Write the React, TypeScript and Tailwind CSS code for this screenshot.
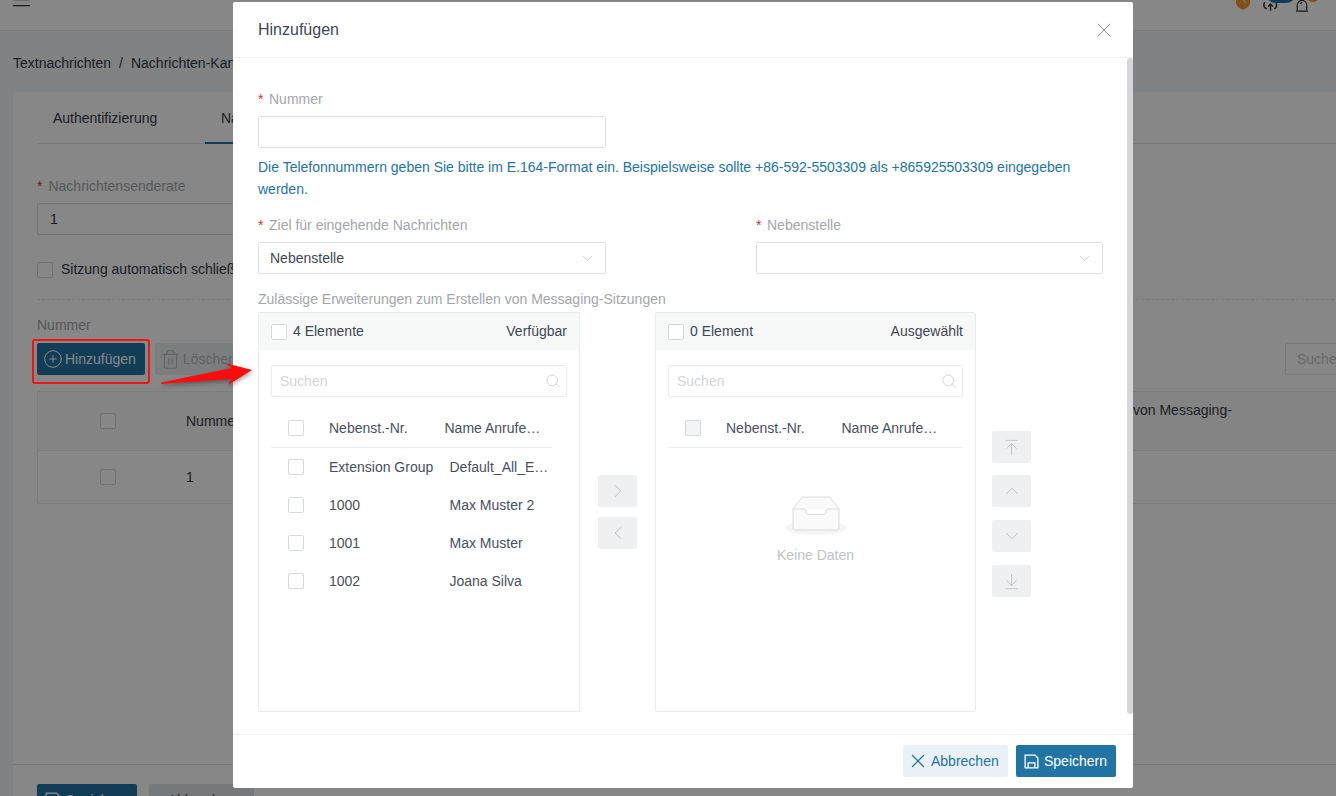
import React from "react";
import { CirclePlus, Trash2, X, Search, ChevronRight, ChevronLeft, ChevronUp, ChevronDown, ArrowUpToLine, ArrowDownToLine, TextAlignJustify } from "lucide-react";

function Box({ disabled = false, dark = false }: { disabled?: boolean; dark?: boolean }) {
  return <span className={`block w-4 h-4 shrink-0 rounded-[2px] border ${dark ? "border-[#d4d9dd]" : "border-[#dfe2e5]"} ${disabled ? "bg-[#f3f4f6]" : "bg-white"}`} />;
}

function Req({ children }: { children: React.ReactNode }) {
  return (
    <div className="h-[22px] leading-[22px] text-[14px] text-[#a3a6ab] flex">
      <span className="text-[#c23a2b] mr-[5px] w-[6px]">*</span>
      {children}
    </div>
  );
}

function SaveIcon({ className }: { className?: string }) {
  return (
    <svg viewBox="0 0 16 16" className={className} fill="none" stroke="currentColor" strokeWidth="1.4">
      <path d="M1.2 1.2h10.6l3 3v10.600H1.2z" />
      <path d="M4.400 14.800V9.400h7.200v5.400" />
    </svg>
  );
}

function Square({ children, className = "" }: { children: React.ReactNode; className?: string }) {
  return <div className={`w-[39px] h-8 rounded-[2px] bg-[#eff0f2] text-[#b9bcc0] flex items-center justify-center ${className}`}>{children}</div>;
}

function SearchBox() {
  return (
    <div className="h-8 border border-[#e9ebee] rounded-[2px] flex items-center justify-between pl-2 pr-[5px] text-[14px] text-[#d3d5d9]">
      <span>Suchen</span>
      <Search size={16} strokeWidth={1.1} className="text-[#c4c6ca]" />
    </div>
  );
}

function TransferHead({ left, right }: { left: string; right: string }) {
  return (
    <div className="h-[37px] bg-[#f7f9f9] flex items-center justify-between pl-3 pr-3 text-[14px] text-[#3f4754]">
      <div className="flex items-center gap-[6px]">
        <Box dark />
        <span>{left}</span>
      </div>
      <span>{right}</span>
    </div>
  );
}

function TableHead({ disabled = false, w }: { disabled?: boolean; w: string }) {
  return (
    <div className={`h-[51px] border-b border-[#ebedf0] flex items-center text-[14px] text-[#49505c] pt-[12px] ${w}`}>
      <span className="ml-[17px] mr-[25px]"><Box disabled={disabled} dark /></span>
      <span className="w-[115.5px]">Nebenst.-Nr.</span>
      <span>Name Anrufe…</span>
    </div>
  );
}

const rows = [
  ["Extension Group", "Default_All_E…"],
  ["1000", "Max Muster 2"],
  ["1001", "Max Muster"],
  ["1002", "Joana Silva"],
];

export default function App() {
  return (
    <div className="relative w-[1336px] h-[796px] overflow-hidden bg-[#f1f5f9] text-[14px] text-[#333a46] font-['Liberation_Sans',Arial,sans-serif]">
      {/* page behind the dialog */}
      <div className="h-[31px] bg-white border-b border-[#e6e8ea] overflow-hidden flex items-end justify-between pl-[14px] pb-[18px]">
        <TextAlignJustify size={21} strokeWidth={1.5} className="text-[#333] mb-[2px] -ml-[3px]" />
        <div className="flex items-end mr-[27px]">
          <svg viewBox="0 0 14 20" className="w-[14px] h-5 text-[#f09a2c] mb-[2px]">
            <path d="M7 0l7 3v9c0 4-3 6-7 8-4-2-7-4-7-8V3z" fill="currentColor" />
            <path d="M5 7l5 6" stroke="#fff" strokeWidth="1.500" opacity=".5" />
          </svg>
          <div className="relative ml-[12px]">
            <span className="absolute -top-[14px] left-[5px] w-7 h-[17px] rounded-full bg-[#2274a5]" />
            <svg viewBox="0 0 18 12" className="block w-[17px] h-3 text-[#333]" fill="none" stroke="currentColor" strokeWidth="1.6">
              <path d="M3 2C1 5 2 8 5 9M15 3c1 3 0 5-2 6M9 11V4M6.500 6.500L9 4l2.500 2.500" />
            </svg>
          </div>
          <div className="relative ml-[16px]">
            <svg viewBox="0 0 16 14" className="block w-[14px] h-3 text-[#333]" fill="none" stroke="currentColor" strokeWidth="1.4">
              <path d="M2.500 12V6a5.500 5.500 0 0 1 11 0v6M1 13h14M6 4.500A3 3 0 0 1 8 3" />
            </svg>
            <span className="absolute -top-[10px] left-[12px] w-3 h-3 rounded-full bg-[#f09a2c]" />
          </div>
        </div>
      </div>

      <div className="ml-[13px] w-[1450px]">
        <div className="h-[61px] pt-[4px] flex items-center text-[#333a46]">
          <span>Textnachrichten</span>
          <span className="mx-[8px]">/</span>
          <span>Nachrichten-Kanäle</span>
        </div>
        <div className="bg-white h-[704px] px-6 flex flex-col">
          <div className="h-[52px] border-b border-[#e4e6e8] flex items-stretch">
            <div className="w-[168px] pl-4 pt-[16px] leading-5">Authentifizierung</div>
            <div className="w-[180px] pt-[16px] leading-5 pl-4 border-b-2 border-[#2274a5] h-[52px]">Nachrichten</div>
          </div>
          <div className="mt-[32px] h-5 leading-5 flex text-[#a3a6ab]">
            <span className="text-[#c23a2b] mr-[6px]">*</span>Nachrichtensenderate
          </div>
          <div className="mt-[7px] w-[400px] h-8 border border-[#d8dbde] rounded-[2px] flex items-center pl-3">1</div>
          <div className="mt-6 flex items-center gap-2">
            <Box dark />
            <span>Sitzung automatisch schließen</span>
          </div>
          <div className="mt-[19px] border-t border-dashed border-[#e4e6e8]" />
          <div className="mt-[15px] h-5 leading-5 text-[#a3a6ab]">Nummer</div>
          <div className="mt-2 flex items-center justify-between pr-[34px]">
            <div className="flex gap-[10px]">
              <div className="h-8 w-[108px] bg-[#2274a5] rounded-[2px] text-white flex items-center pl-[6px] gap-[2px]">
                <CirclePlus size={20} strokeWidth={1.2} />
                <span>Hinzufügen</span>
              </div>
              <div className="h-8 w-[110px] bg-[#e9eeee] rounded-[2px] text-[#b4b8bc] flex items-center pl-[5px] gap-[2px]">
                <Trash2 size={21} strokeWidth={1.2} />
                <span>Löschen</span>
              </div>
            </div>
            <div className="h-8 w-[120px] border border-[#e4e6e8] rounded-[2px] text-[#c4c6ca] flex items-center pl-[11px]">Suchen</div>
          </div>
          <div className="mt-4 border border-[#e8eaec] rounded-[2px]">
            <div className="h-[59px] bg-[#fafafa] border-b border-[#e8eaec] flex items-center relative">
              <span className="ml-[62px] mr-[70px]"><Box dark /></span>
              <span>Nummer</span>
              <span className="absolute left-[1095px] top-[8px]">von Messaging-</span>
            </div>
            <div className="h-[52px] flex items-center">
              <span className="ml-[62px] mr-[70px]"><Box dark /></span>
              <span>1</span>
            </div>
          </div>
          <div className="mt-auto -mx-6 border-t border-[#e4e6e8] h-[32px] pt-[19px] pl-6 flex gap-3 overflow-visible">
            <div className="h-8 w-[100px] bg-[#2274a5] rounded-[2px] text-white flex items-center justify-center gap-1 shrink-0">
              <SaveIcon className="w-4 h-4" />
              <span>Speichern</span>
            </div>
            <div className="h-8 w-[105px] bg-[#dfe5e8] rounded-[2px] text-[#555] flex items-center justify-center shrink-0">Abbrechen</div>
          </div>
        </div>
      </div>

      {/* dimming layer */}
      <div className="absolute inset-0 bg-black/[0.47]" />

      {/* highlight box on the page */}
      <div className="absolute left-[32px] top-[339px] w-[118px] h-[45px] border-2 border-[#f01414] rounded-[3px]" />

      {/* dialog */}
      <div className="absolute left-[233px] top-[2px] w-[900px] h-[786px] bg-white rounded-[2px] flex flex-col">
        <div className="h-[56px] shrink-0 border-b border-[#eceef0] flex items-center justify-between pl-[25px] pr-[17px]">
          <span className="text-[16px] text-[#3f4754]">Hinzufügen</span>
          <X size={24} strokeWidth={1} className="text-[#8f9297]" />
        </div>

        <div className="relative flex-1 pl-[25px] pt-[30px]">
          <span className="absolute right-0 top-0 w-[6px] h-[656px] rounded-[3px] bg-[#d4d6d9]" />
          <Req>Nummer</Req>
          <div className="mt-[6px] w-[348px] h-8 border border-[#dfe2e5] rounded-[2px]" />
          <p className="mt-[8px] w-[840px] text-[14px] leading-[22px] text-[#2274a5]">
            Die Telefonnummern geben Sie bitte im E.164-Format ein. Beispielsweise sollte +86-592-5503309 als +865925503309 eingegeben werden.
          </p>
          <div className="mt-[14px] flex">
            <div className="w-[498px]">
              <Req>Ziel für eingehende Nachrichten</Req>
              <div className="mt-[6px] w-[348px] h-8 border border-[#dfe2e5] rounded-[2px] flex items-center justify-between pl-[11px] pr-[9px] text-[#3f4754]">
                <span>Nebenstelle</span>
                <ChevronDown size={17} strokeWidth={0.9} className="text-[#a9acb0]" />
              </div>
            </div>
            <div className="w-[347px]">
              <Req>Nebenstelle</Req>
              <div className="mt-[6px] h-8 border border-[#dfe2e5] rounded-[2px] flex items-center justify-end pr-[9px]">
                <ChevronDown size={17} strokeWidth={0.9} className="text-[#a9acb0]" />
              </div>
            </div>
          </div>
          <div className="mt-[14px] h-[22px] leading-[22px] text-[#a3a6ab]">Zulässige Erweiterungen zum Erstellen von Messaging-Sitzungen</div>
          <div className="mt-[2px] flex items-start">
            <div className="w-[322px] h-[400px] border border-[#e9ebee] rounded-[2px]">
              <TransferHead left="4 Elemente" right="Verfügbar" />
              <div className="px-3 pt-[15px]">
                <SearchBox />
              </div>
              <div className="pl-3">
                <TableHead w="w-[281px]" />
                {rows.map((r) => (
                  <div key={r[0]} className="h-[38px] flex items-center text-[#49505c]">
                    <span className="ml-[17px] mr-[25px]"><Box dark /></span>
                    <span className="w-[120.5px]">{r[0]}</span>
                    <span>{r[1]}</span>
                  </div>
                ))}
              </div>
            </div>

            <div className="w-[75px] pt-[163px] pl-[18px] flex flex-col gap-[10px]">
              <Square><ChevronRight size={22} strokeWidth={1} /></Square>
              <Square><ChevronLeft size={22} strokeWidth={1} /></Square>
            </div>

            <div className="w-[321px] h-[400px] border border-[#e9ebee] rounded-[2px]">
              <TransferHead left="0 Element" right="Ausgewählt" />
              <div className="px-3 pt-[15px]">
                <SearchBox />
              </div>
              <div className="px-3">
                <TableHead disabled w="w-full" />
                <div className="flex flex-col items-center pt-[47px]">
                  <svg viewBox="0 0 64 41" className="w-[64px] h-[41px]">
                    <ellipse cx="32" cy="33" rx="31" ry="7" fill="#f5f5f5" />
                    <path d="M9 13.500L18.500 2h27L55 13.500V33a2 2 0 0 1-2 2H11a2 2 0 0 1-2-2z" fill="#fafafa" stroke="#d9dadc" strokeWidth="1" />
                    <path d="M9 14h11c1.400 0 2 .8 2 2 0 2 1 3.500 3 3.500h14c2 0 3-1.500 3-3.500 0-1.200.6-2 2-2h11" fill="#fff" stroke="#d9dadc" strokeWidth="1" />
                  </svg>
                  <span className="mt-[9px] text-[#c0c3c7]">Keine Daten</span>
                </div>
              </div>
            </div>

            <div className="pl-[16px] pt-[119px] flex flex-col">
              <Square><ArrowUpToLine size={19} strokeWidth={1} /></Square>
              <Square className="mt-3"><ChevronUp size={22} strokeWidth={1} /></Square>
              <Square className="mt-[13px]"><ChevronDown size={22} strokeWidth={1} /></Square>
              <Square className="mt-[13px]"><ArrowDownToLine size={19} strokeWidth={1} /></Square>
            </div>
          </div>
        </div>

        <div className="h-[54px] shrink-0 border-t border-[#eceef0] flex items-start justify-end gap-2 pt-[10px] pr-[17px]">
          <div className="h-8 w-[105px] rounded-[2px] bg-[#e9f1f6] text-[#2274a5] flex items-center pl-[4px] gap-[2px]">
            <X size={22} strokeWidth={1.4} />
            <span>Abbrechen</span>
          </div>
          <div className="h-8 w-[100px] rounded-[2px] bg-[#2274a5] text-white flex items-center pl-2 gap-[5px]">
            <SaveIcon className="w-[15px] h-[15px]" />
            <span>Speichern</span>
          </div>
        </div>
      </div>

      {/* annotation arrow */}
      <svg className="absolute left-[155px] top-[355px] w-[105px] h-[36px]" viewBox="0 0 105 36">
        <path d="M6 27.500L77 13 70 8l27 7-24 15 3-6L6 29z" fill="#fb0d0d" style={{ filter: "drop-shadow(1px 2px 2px rgba(0,0,0,.35))" }} />
      </svg>
    </div>
  );
}
